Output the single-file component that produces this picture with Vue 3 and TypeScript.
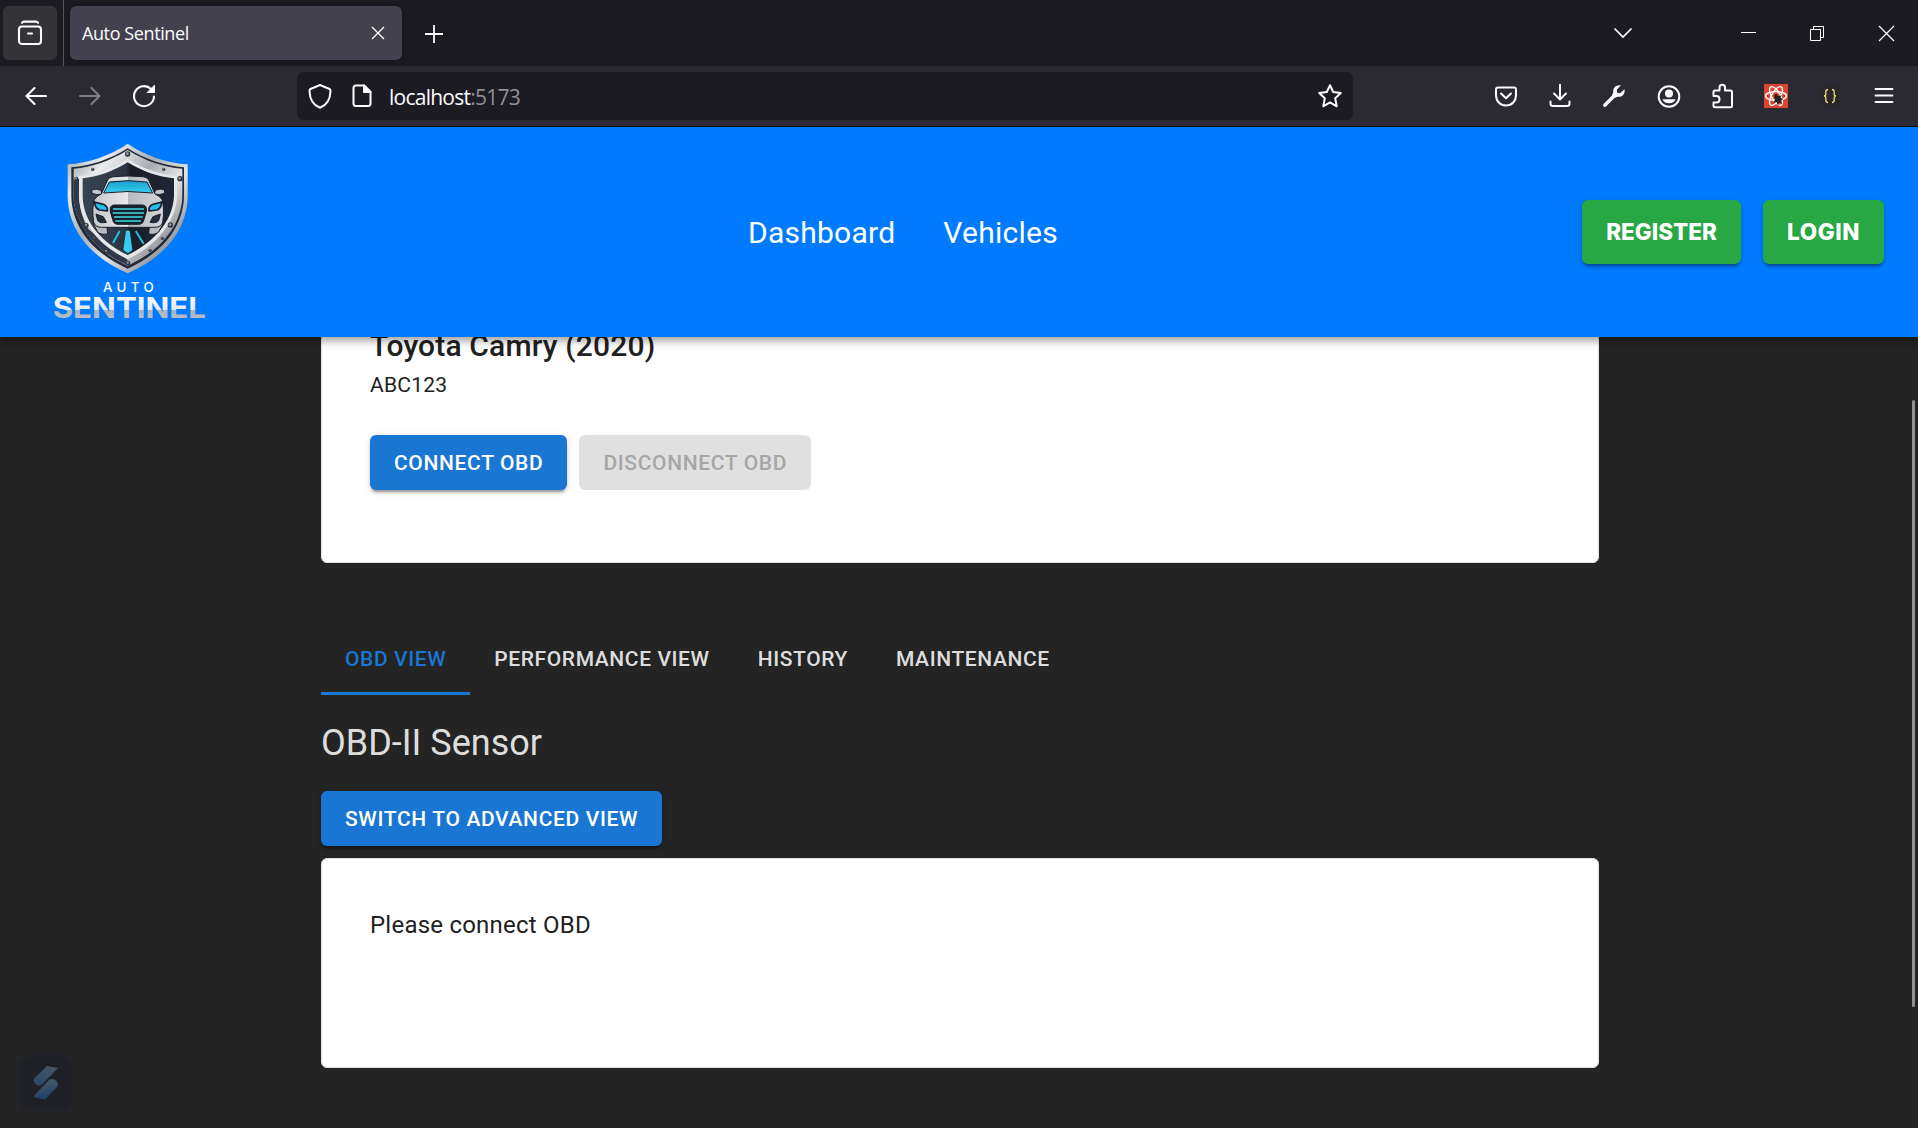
<script setup lang="ts">
import { ref } from 'vue'

const links: string[] = ['Dashboard', 'Vehicles']
const tabs: string[] = ['OBD View', 'Performance View', 'History', 'Maintenance']
const activeTab = ref<number>(0)

const rivets: [number, number, number][] = [
  [263, 72, 8], [109, 146, 6], [420, 146, 8], [139, 286, 7], [391, 285, 8],
  [199, 364, 6], [330, 361, 5], [264, 399, 7], [158, 118, 5], [371, 118, 5],
  [163, 324, 4], [367, 325, 5],
]
</script>

<template>
  <div class="window">
    <div class="tabstrip">
      <div class="archive">
        <svg width="26" height="26" viewBox="0 0 26 26" fill="none" stroke="#fbfbfe" stroke-width="2.1" stroke-linecap="round">
          <rect x="2" y="6.5" width="22" height="17.5" rx="3" />
          <path d="M5 2.8Q5.6 1.6 7 1.6H19Q20.4 1.6 21 2.8" />
          <path d="M11 13.5H15" />
        </svg>
      </div>
      <div class="divider"></div>
      <div class="browser-tab">
        <span>Auto Sentinel</span>
        <svg width="14" height="14" viewBox="0 0 14 14" stroke="#fbfbfe" stroke-width="1.4"><path d="M1 1L13 13M13 1L1 13" /></svg>
      </div>
      <svg class="plus" width="18" height="18" viewBox="0 0 18 18" stroke="#fbfbfe" stroke-width="1.8"><path d="M9 0V18M0 9H18" /></svg>
      <div class="controls">
        <span class="chev"><svg width="20" height="12" viewBox="0 0 20 12" fill="none" stroke="#fbfbfe" stroke-width="1.7"><path d="M1.5 1.5L10 10L18.500 1.500" /></svg></span>
        <span><svg width="15" height="15" viewBox="0 0 15 15" stroke="#fff" stroke-width="1"><path d="M0 6.500H15" /></svg></span>
        <span><svg width="15" height="15" viewBox="0 0 15 15" fill="none" stroke="#fff" stroke-width="1"><path d="M0.500 3.500H10.500V14.500H0.500ZM3.500 3.500V0.500H13.500V11.500H10.500" /></svg></span>
        <span><svg width="17" height="17" viewBox="0 0 17 17" stroke="#fff" stroke-width="1.2"><path d="M1 1L16 16M16 1L1 16" /></svg></span>
      </div>
    </div>

    <div class="toolbar">
      <div class="nav-icons">
        <span><svg width="22" height="20" viewBox="0 0 22 20" fill="none" stroke="#fbfbfe" stroke-width="2.1" stroke-linecap="round" stroke-linejoin="round"><path d="M21 10H1.500M9.500 2L1.500 10L9.500 18" /></svg></span>
        <span class="dim"><svg width="22" height="20" viewBox="0 0 22 20" fill="none" stroke="#fbfbfe" stroke-width="2" stroke-linecap="round" stroke-linejoin="round"><path d="M1 10H20.500M12.500 2L20.500 10L12.500 18" /></svg></span>
        <span><svg width="24" height="24" viewBox="0 0 24 24" fill="none" stroke="#fbfbfe" stroke-width="2.100" stroke-linecap="round"><path d="M22 12.500A10 10 0 1 1 19 5" /><path d="M22.500 1.500V8.500H15.500Z" fill="#fbfbfe" stroke-width="1" stroke-linejoin="round" /></svg></span>
      </div>
      <div class="urlbar">
        <svg class="shield" width="24" height="26" viewBox="0 0 24 26" fill="none" stroke="#fbfbfe" stroke-width="2" stroke-linejoin="round"><path d="M12 2L21.500 6Q22.500 6.500 22.500 8C22.300 16 19 22 12 24.800C5 22 1.700 16 1.500 8Q1.500 6.500 2.500 6Z" /></svg>
        <svg class="doc" width="20" height="24" viewBox="0 0 20 24" fill="none" stroke="#fbfbfe" stroke-width="2" stroke-linejoin="round"><path d="M12 1.500H4Q1.500 1.500 1.500 4V19.500Q1.500 22 4 22H16Q18.500 22 18.500 19.500V8Z" /><path d="M12 1.500V8H18.500Z" fill="#fbfbfe" /></svg>
        <span class="url"><b>localhost</b>:5173</span>
        <svg class="star" width="26" height="26" viewBox="0 0 26 26" fill="none" stroke="#fbfbfe" stroke-width="2" stroke-linejoin="round"><path d="M13 2.200L16.200 9L23.800 9.900L18.200 15.200L19.700 23.300L13 19.400L6.300 23.300L7.800 15.200L2.200 9.900L9.800 9Z" /></svg>
      </div>
      <div class="ext-icons">
        <span><svg width="24" height="24" viewBox="0 0 24 24" fill="none" stroke="#fbfbfe" stroke-width="2" stroke-linecap="round" stroke-linejoin="round"><path d="M4 3.500H20Q22 3.500 22 5.500V11C22 17 18 21.500 12 21.500S2 17 2 11V5.500Q2 3.500 4 3.500Z" /><path d="M7 9.500L12 14.300L17 9.500" /></svg></span>
        <span><svg width="24" height="24" viewBox="0 0 24 24" fill="none" stroke="#fbfbfe" stroke-width="2" stroke-linecap="round" stroke-linejoin="round"><path d="M12 .8V15.500M6 9.500L12 15.500L18 9.500M2.500 17.500V19.500Q2.500 22 5 22H19Q21.500 22 21.500 19.500V17.500" /></svg></span>
        <span><svg width="24" height="24" viewBox="0 0 24 24"><path d="M2.800 21.300L13 11" stroke="#fbfbfe" stroke-width="3.400" stroke-linecap="round" /><path d="M18.800 1.600C15 .4 10.500 3.500 11.300 8.200L10 11.500L12.500 14L15.800 12.800C20.500 13.500 23.600 9 22.400 5.200L18.200 9.200L15.200 8.800L14.800 5.800Z" fill="#fbfbfe" /></svg></span>
        <span class="nudge"><svg width="24" height="24" viewBox="0 0 24 24"><circle cx="12" cy="12.500" r="10.300" fill="none" stroke="#fbfbfe" stroke-width="2" /><circle cx="12" cy="9.500" r="4" fill="#fbfbfe" /><path d="M5.500 15.200H18.500C17.500 18 15.500 19.300 12 19.300S6.500 18 5.500 15.200Z" fill="#fbfbfe" /></svg></span>
        <span class="nudge"><svg width="24" height="26" viewBox="0 0 24 26" fill="none" stroke="#fbfbfe" stroke-width="2" stroke-linejoin="round"><path d="M2.500 11.500V9Q2.500 7.500 4 7.500H8.500V4.500C8.500 .9 14 .9 14 4.500V7.500H19.500Q21 7.500 21 9V22.800Q21 24.300 19.500 24.300H4Q2.500 24.300 2.500 22.800V19.500H5.500C9.500 19.500 9.500 13 5.500 13H2.500Z" /></svg></span>
        <span><svg width="24" height="24" viewBox="0 0 24 24"><rect width="24" height="24" rx="1" fill="#db4632" /><g fill="none" stroke="#fff" stroke-width="1.300"><ellipse cx="12" cy="12" rx="10.500" ry="4.300" /><ellipse cx="12" cy="12" rx="10.500" ry="4.300" transform="rotate(60 12 12)" /><ellipse cx="12" cy="12" rx="10.500" ry="4.300" transform="rotate(120 12 12)" /></g><path d="M10 11.500L12 9.500L14 12L17.500 11.500L16.500 13.500L19 15.500L17 16.500L18 20L15 18.500L14 21.500L12.500 18L9.500 19.500L11 15.500Z" fill="#222" /></svg></span>
        <span><svg width="22" height="24" viewBox="0 0 22 24"><rect x="1" y="1" width="20" height="22" rx="7" fill="#28282b" /><path d="M9 5.500Q6.800 5.500 6.800 8V10Q6.800 12 5 12Q6.800 12 6.800 14V16Q6.800 18.500 9 18.500M13 5.500Q15.200 5.500 15.200 8V10Q15.200 12 17 12Q15.200 12 15.200 14V16Q15.200 18.500 13 18.500" fill="none" stroke="#e9dc6c" stroke-width="1.300" /></svg></span>
        <span><svg width="20" height="18" viewBox="0 0 20 18" stroke="#fbfbfe" stroke-width="1.900" stroke-linecap="round"><path d="M1.500 2H18.500M1.500 8.500H18.500M1.500 15H18.500" /></svg></span>
      </div>
    </div>

    <div class="viewport">
      <header class="appbar">
        <svg class="logo" width="180" height="210" viewBox="0 0 540 630">
          <defs>
            <linearGradient id="steel" x1="0" y1="0" x2="1" y2="1">
              <stop offset="0" stop-color="#8d9298" /><stop offset=".2" stop-color="#e9ebec" />
              <stop offset=".42" stop-color="#a9adb2" /><stop offset=".6" stop-color="#e4e4e4" />
              <stop offset=".8" stop-color="#9b9ea2" /><stop offset="1" stop-color="#d8d8d8" />
            </linearGradient>
            <linearGradient id="dark" x1="0" y1="0" x2="1" y2="0">
              <stop offset="0" stop-color="#394454" /><stop offset=".48" stop-color="#2a3340" />
              <stop offset=".52" stop-color="#181e28" /><stop offset="1" stop-color="#202734" />
            </linearGradient>
            <linearGradient id="body" x1="0" y1="0" x2="1" y2="0">
              <stop offset="0" stop-color="#c5c7cb" /><stop offset=".5" stop-color="#e9e9eb" />
              <stop offset=".5" stop-color="#b8bbc0" /><stop offset="1" stop-color="#d2d4d8" />
            </linearGradient>
            <linearGradient id="glass" x1="0" y1="0" x2="0" y2="1">
              <stop offset="0" stop-color="#159fcb" /><stop offset="1" stop-color="#3dcdf0" />
            </linearGradient>
            <linearGradient id="word" x1="0" y1="0" x2="0" y2="1">
              <stop offset="0" stop-color="#ffffff" /><stop offset=".55" stop-color="#e6eaf0" />
              <stop offset=".57" stop-color="#aeb4bd" /><stop offset="1" stop-color="#c3c7cc" />
            </linearGradient>
          </defs>
          <path d="M263 41C318 78 380 99 443 103V200C441 310 360 388 263 430C166 388 85 310 83 200V103C146 99 208 78 263 41Z" fill="url(#steel)" />
          <path d="M263 55C316 88 374 108 432 112V200C429 302 353 376 263 416C173 376 97 302 94 200V112C152 108 210 88 263 55Z" fill="#222b38" />
          <path d="M263 60C316 93 372 112 427 116V200C423 298 349 368 263 407C200 379 150 337 124 280C108 250 101 225 101 200V116C154 112 210 93 263 60Z" fill="url(#steel)" />
          <path d="M101 150L118 146V210C120 240 129 270 145 298L262 388V405C200 379 150 337 124 280C108 250 101 225 101 200Z" fill="#303947" />
          <path d="M263 86C309 117 361 134 411 138V200C406 284 341 350 263 388C185 350 120 284 117 200V138C167 134 217 117 263 86Z" fill="#e6e7e9" />
          <path d="M263 97C307 124 356 141 402 145V200C397 278 337 339 263 375C189 339 130 278 128 200V145C171 141 220 124 263 97Z" fill="url(#dark)" />
          <g stroke="#19202b" stroke-width="3" stroke-linejoin="round">
            <path d="M160 282H200L203 312Q180 316 172 304ZM369 282H329L326 312Q349 316 357 304Z" fill="#b7babf" />
            <path d="M155 180Q168 174 183 181L186 192Q170 197 156 190ZM374 180Q361 174 346 181L343 192Q359 197 373 190Z" fill="#c4c6ca" />
            <path d="M184 192L203 150Q208 141 220 140Q264 136 309 140Q321 141 326 150L345 192Q360 198 366 209Q374 235 368 277Q364 291 345 292H184Q165 291 161 277Q155 235 163 209Q169 198 184 192Z" fill="url(#body)" />
            <path d="M191 189L208 156Q264 148 321 156L338 189Q264 180 191 189Z" fill="url(#glass)" />
            <path d="M163 216L190 223Q204 229 202 243L178 240Q166 235 163 216ZM366 216L339 223Q325 229 327 243L351 240Q363 235 366 216Z" fill="#20c1f0" stroke-width="5" />
            <path d="M168 252L190 260L199 277Q180 281 173 272ZM361 252L339 260L330 277Q349 281 356 272Z" fill="#242c37" />
            <path d="M222 225H308Q322 226 319 245L310 275Q307 283 296 283H234Q223 283 220 275L211 245Q208 226 222 225Z" fill="#18212b" />
          </g>
          <path d="M219 237H312M218 249H312M222 261H308M226 273H303" stroke="#3ddce8" stroke-width="5" />
          <path d="M258 302H269L277 360L264 370L250 360Z" fill="#36cdec" />
          <path d="M239 303L219 339M287 303L311 341" stroke="#26bde0" stroke-width="6" />
          <g v-for="([x, y, r], i) in rivets" :key="i">
            <circle :cx="x" :cy="y" :r="r" fill="#2c333d" />
            <circle :cx="x - 1" :cy="y - 1" :r="r * 0.5" fill="#979ca2" />
          </g>
          <text x="189" y="486" textLength="152" lengthAdjust="spacing" font-size="40" class="auto">AUTO</text>
          <text x="38" y="565" textLength="460" lengthAdjust="spacingAndGlyphs" font-size="86" class="sentinel" fill="url(#word)">SENTINEL</text>
        </svg>
        <nav class="links">
          <a v-for="link in links" :key="link">{{ link }}</a>
        </nav>
        <div class="auth">
          <button class="register">REGISTER</button>
          <button class="login">LOGIN</button>
        </div>
      </header>

      <main class="page">
        <section class="card vehicle">
          <h2>Toyota Camry (2020)</h2>
          <p>ABC123</p>
          <div class="actions">
            <button class="btn">Connect OBD</button>
            <button class="btn disabled">Disconnect OBD</button>
          </div>
        </section>

        <div class="tabs">
          <div v-for="(tab, i) in tabs" :key="tab" class="tab" :class="{ active: i === activeTab }" @click="activeTab = i">{{ tab }}</div>
        </div>

        <h3>OBD-II Sensor</h3>
        <button class="btn switch">Switch to Advanced View</button>
        <section class="card notice">Please connect OBD</section>
      </main>

      <div class="badge">
        <svg width="26" height="34" viewBox="0 0 26 34">
          <defs>
            <linearGradient id="ba" x1="1" y1="0" x2="0" y2="1"><stop offset="0" stop-color="#4b5661" /><stop offset="1" stop-color="#26476c" /></linearGradient>
            <linearGradient id="bb" x1="0" y1="0" x2="0.300" y2="1"><stop offset="0" stop-color="#50606d" /><stop offset="1" stop-color="#204066" /></linearGradient>
          </defs>
          <path d="M14 0L25 2L9 18.500Q6 21 2.500 18Q-1 14.500 1.500 12Z" fill="url(#ba)" />
          <path d="M0 31L16 14Q19 12 23 14.500Q26.500 18 24 21L12 33.500Z" fill="url(#bb)" />
        </svg>
      </div>
      <div class="scroll-thumb"></div>
    </div>
  </div>
</template>

<style>
body {
  margin: 0;
  background: #242424;
}
</style>

<style scoped>
* {
  box-sizing: border-box;
}
.window {
  width: 1918px;
  height: 1128px;
  overflow: hidden;
  display: flex;
  flex-direction: column;
  font-family: Roboto, sans-serif;
  background: #242424;
  border-bottom: 1px solid #2a2128;
}
svg {
  display: block;
  flex: none;
}
.tabstrip {
  height: 66px;
  flex: none;
  display: flex;
  align-items: center;
  background: #1c1b22;
  padding-left: 3px;
}
.archive {
  width: 54px;
  height: 54px;
  border-radius: 6px;
  background: #343338;
  display: flex;
  align-items: center;
  justify-content: center;
}
.divider {
  width: 1px;
  height: 66px;
  margin: 0 6px;
  background: #57565c;
}
.browser-tab {
  width: 332px;
  height: 54px;
  border-radius: 6px;
  background: #42414d;
  box-shadow: 0 0 6px rgba(0, 0, 0, 0.4);
  display: flex;
  align-items: center;
  justify-content: space-between;
  padding: 0 17px 0 12px;
  color: #fbfbfe;
  font-family: "Open Sans", sans-serif;
  font-size: 18px;
  letter-spacing: -0.4px;
}
.plus {
  margin-left: 23px;
  margin-top: 2px;
}
.controls {
  margin-left: auto;
  display: flex;
  margin-right: -3px;
}
.controls span {
  width: 69px;
  height: 66px;
  display: flex;
  align-items: center;
  justify-content: center;
}
.controls .chev {
  margin-right: 57px;
}
.toolbar {
  height: 61px;
  flex: none;
  display: flex;
  align-items: center;
  background: #2b2a33;
  border-bottom: 1px solid #0c0c0d;
  padding: 0 7px 0 9px;
}
.nav-icons,
.ext-icons {
  display: flex;
}
.nav-icons span,
.ext-icons span {
  width: 54px;
  height: 54px;
  display: flex;
  align-items: center;
  justify-content: center;
}
.ext-icons .nudge {
  padding-left: 2px;
}
.dim {
  opacity: 0.4;
}
.urlbar {
  width: 1056px;
  height: 48px;
  margin-left: 126px;
  border-radius: 6px;
  background: #1c1b22;
  display: flex;
  align-items: center;
  padding: 0 10px 0 11px;
}
.doc {
  margin-left: 20px;
}
.url {
  margin: 1px 0 0 17px;
  font-family: "Open Sans", sans-serif;
  font-size: 21px;
  letter-spacing: -0.75px;
  color: #8f8e95;
}
.url b {
  font-weight: 400;
  color: #fbfbfe;
}
.star {
  margin-left: auto;
}
.ext-icons {
  margin-left: auto;
}
.viewport {
  flex: 1;
  min-height: 0;
  position: relative;
  overflow: hidden;
}
.appbar {
  position: relative;
  z-index: 2;
  height: 210px;
  background: #007bff;
  display: flex;
  align-items: center;
  padding: 0 34px 0 40px;
  box-shadow: 0 3px 6px -1.5px rgba(0, 0, 0, 0.2), 0 6px 7.5px rgba(0, 0, 0, 0.14), 0 1.5px 15px rgba(0, 0, 0, 0.12);
}
.logo {
  margin-top: 6px;
}
.auto {
  font-family: Inter, sans-serif;
  font-weight: 500;
  fill: #fff;
}
.sentinel {
  font-family: Inter, sans-serif;
  font-weight: 700;
}
.links {
  display: flex;
  gap: 48px;
  margin-left: 528px;
  color: #fff;
  font-size: 30px;
  letter-spacing: 0.25px;
}
.auth {
  display: flex;
  gap: 22px;
  margin-left: auto;
}
.auth button {
  height: 64px;
  padding: 0 0 2px;
  border: 0;
  border-radius: 6px;
  background: #28a745;
  color: #fff;
  font-family: Inter, sans-serif;
  font-weight: 800;
  font-size: 22.5px;
  box-shadow: 0 4.5px 1.5px -3px rgba(0, 0, 0, 0.2), 0 3px 3px rgba(0, 0, 0, 0.14), 0 1.5px 7.5px rgba(0, 0, 0, 0.12);
}
.auth .register {
  width: 159px;
}
.auth .login {
  width: 121px;
  letter-spacing: 0.6px;
}
.page {
  width: 1278px;
  margin-left: 321px;
  color: rgba(255, 255, 255, 0.87);
}
.card {
  background: #fff;
  border: 1px solid #e0e0e0;
  border-radius: 6px;
  color: #212121;
  padding: 48px;
}
.vehicle {
  margin-top: -64px;
  height: 290px;
}
h2 {
  margin: 0;
  font-size: 30px;
  line-height: 48px;
  font-weight: 500;
  letter-spacing: 0.17px;
}
.vehicle p {
  margin: 0;
  font-size: 21px;
  line-height: 30px;
  letter-spacing: 0.225px;
}
.actions {
  display: flex;
  gap: 12px;
  margin-top: 35px;
}
.btn {
  height: 55px;
  padding: 0 24px;
  border: 0;
  border-radius: 6px;
  background: #1976d2;
  color: #fff;
  font-family: Roboto, sans-serif;
  font-weight: 500;
  font-size: 21px;
  letter-spacing: 0.65px;
  text-transform: uppercase;
  white-space: nowrap;
  box-shadow: 0 4.5px 1.5px -3px rgba(0, 0, 0, 0.2), 0 3px 3px rgba(0, 0, 0, 0.14), 0 1.5px 7.5px rgba(0, 0, 0, 0.12);
}
.btn.disabled {
  background: #e0e0e0;
  color: #a6a6a6;
  box-shadow: none;
}
.tabs {
  display: flex;
  height: 72px;
  margin-top: 60px;
}
.tab {
  padding: 0 24px;
  line-height: 72px;
  font-size: 21px;
  font-weight: 500;
  letter-spacing: 0.6px;
  text-transform: uppercase;
  white-space: nowrap;
}
.tab.active {
  color: #1976d2;
  box-shadow: inset 0 -3px #1976d2;
}
h3 {
  margin: 24px 0;
  font-size: 36px;
  line-height: 48px;
  font-weight: 400;
}
.switch {
  display: block;
}
.notice {
  margin-top: 12px;
  height: 210px;
  font-size: 24px;
  line-height: 36px;
  letter-spacing: 0.225px;
}
.badge {
  position: absolute;
  left: 16px;
  bottom: 14px;
  width: 60px;
  height: 60px;
  border-radius: 14px;
  border: 4px solid #222328;
  background: #1f2025;
  display: flex;
  align-items: center;
  justify-content: center;
}
.scroll-thumb {
  position: absolute;
  right: 3px;
  top: 273px;
  width: 3px;
  height: 607px;
  border-radius: 2px;
  background: #919191;
}
</style>
